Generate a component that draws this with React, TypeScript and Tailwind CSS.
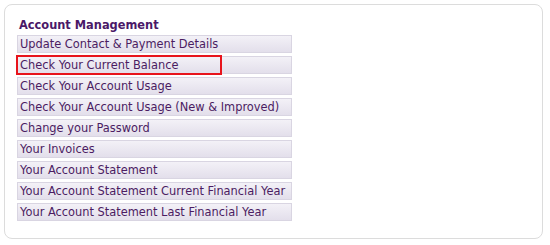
const links = [
  "Update Contact & Payment Details",
  "Check Your Current Balance",
  "Check Your Account Usage",
  "Check Your Account Usage (New & Improved)",
  "Change your Password",
  "Your Invoices",
  "Your Account Statement",
  "Your Account Statement Current Financial Year",
  "Your Account Statement Last Financial Year",
];

export default function App() {
  return (
    <div className="w-[550px] h-[245px] bg-white pt-[4px] pl-[4px] font-['DejaVu_Sans',Verdana,sans-serif]">
      <div className="w-[539px] h-[235px] rounded-[8px] border border-[#dcdcdc] pl-[12px] pt-[12px]">
        <h2 className="text-[11.4px] leading-[16px] font-bold text-[#4a1868] pl-[2px] mb-[2px]">
          Account Management
        </h2>
        <ul className="flex flex-col gap-[3px] w-[275px]">
          {links.map((label, i) => (
            <li key={label} className="relative">
              <a
                href="#"
                className="block h-[18px] border border-[#d9d5e2] bg-gradient-to-b from-[#f3f1f7] to-[#e3dfeb] pl-[2px] text-[11.4px] leading-[16px] text-[#4b1c62] whitespace-nowrap"
              >
                {label}
              </a>
              {i === 1 && (
                <span className="absolute left-[-1px] top-[-1px] w-[206px] h-[20px] border-2 border-[#e8141c] pointer-events-none" />
              )}
            </li>
          ))}
        </ul>
      </div>
    </div>
  );
}
